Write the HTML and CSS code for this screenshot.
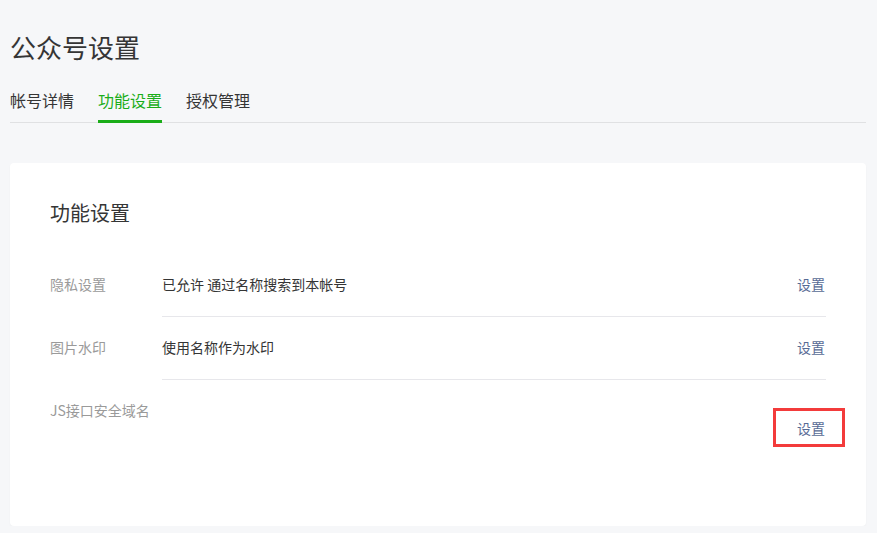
FILE: index.html
```html
<!DOCTYPE html>
<html lang="zh-CN">
<head>
<meta charset="utf-8">
<title>公众号设置</title>
<link rel="stylesheet" href="styles.css">
</head>
<body>
<div class="page">
  <h1 class="page-title">公众号设置</h1>
  <div class="tabs">
    <a class="tab">帐号详情</a>
    <a class="tab active">功能设置</a>
    <a class="tab">授权管理</a>
  </div>
  <div class="card">
    <h2 class="card-title">功能设置</h2>
    <div class="row">
      <div class="label">隐私设置</div>
      <div class="content">
        <div class="value">已允许 通过名称搜索到本帐号</div>
        <a class="action">设置</a>
      </div>
    </div>
    <div class="row">
      <div class="label">图片水印</div>
      <div class="content">
        <div class="value">使用名称作为水印</div>
        <a class="action">设置</a>
      </div>
    </div>
    <div class="row last">
      <div class="label">JS接口安全域名</div>
      <div class="content">
        <div class="value"></div>
        <a class="action action-low highlight">设置</a>
      </div>
    </div>
  </div>
</div>
</body>
</html>
```
FILE: styles.css
```css
html, body {
  margin: 0;
  padding: 0;
  background: #f6f7f9;
}
body {
  font-family: "Noto Sans CJK SC", "Liberation Sans", sans-serif;
  color: #353535;
}
.page {
  padding: 0 11px 0 10px;
}
.page-title {
  margin: 0;
  padding-top: 29px;
  font-size: 26px;
  line-height: 36px;
  font-weight: 400;
  color: #353535;
}
.tabs {
  display: flex;
  gap: 24px;
  margin-top: 23px;
  border-bottom: 1px solid #e0e1e3;
}
.tab {
  font-size: 16px;
  line-height: 24px;
  padding-bottom: 8px;
  margin-bottom: -1px;
  border-bottom: 3px solid transparent;
  color: #353535;
}
.tab.active {
  color: #1aad19;
  border-bottom-color: #1aad19;
}
.card {
  margin-top: 40px;
  background: #fff;
  border-radius: 4px;
  box-shadow: 0 1px 2px rgba(0, 0, 0, 0.04);
  padding: 36px 40px 66px 40px;
}
.card-title {
  margin: 0 0 27px 0;
  font-size: 20px;
  line-height: 28px;
  font-weight: 400;
  color: #353535;
}
.row {
  display: flex;
  font-size: 14px;
  line-height: 20px;
}
.label {
  width: 112px;
  flex: none;
  padding-top: 20px;
  color: #9a9a9a;
}
.content {
  flex: 1;
  display: flex;
  justify-content: space-between;
  align-items: flex-start;
  padding: 20px 0 22px 0;
  border-bottom: 1px solid #e7e7eb;
}
.row.last .content {
  border-bottom: none;
}
.value {
  color: #353535;
}
.action {
  color: #576b95;
  position: relative;
  margin-right: 1px;
}
.action-low {
  margin-top: 18px;
}
.highlight::after {
  content: "";
  position: absolute;
  left: -24px;
  right: -20px;
  top: -10px;
  bottom: -9px;
  border: 3px solid #f33b3b;
}
```
